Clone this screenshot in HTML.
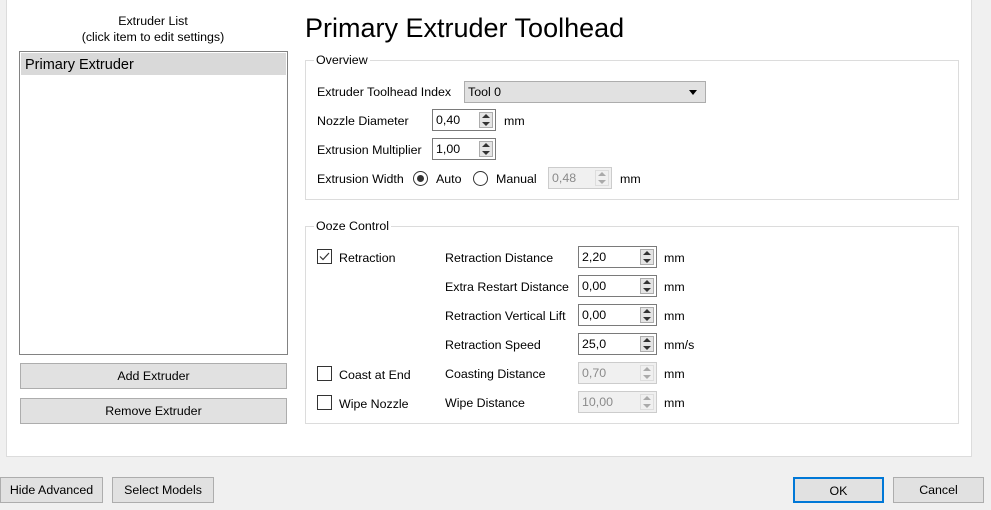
<!DOCTYPE html>
<html><head><style>
*{box-sizing:border-box;margin:0;padding:0}
body{width:991px;height:510px;background:#f0f0f0;font-family:"Liberation Sans",sans-serif;font-size:12.4px;color:#000;position:relative;overflow:hidden}
.a{position:absolute}
.panel{left:6px;top:-1px;width:966px;height:458px;background:#fff;border:1px solid #dcdcdc}
.btn{position:absolute;background:#e1e1e1;border:1px solid #adadad;text-align:center;line-height:25px}
.grp{position:absolute;border:1px solid #dcdcdc}
.grp .lb{position:absolute;left:8px;top:-8px;background:#fff;padding:0 2px;line-height:14px}
.spin{position:absolute;width:64px;height:22px;border:1px solid #7a7a7a;background:#fff;padding-left:3px;line-height:21px}
.spin.d{border-color:#ccc;background:#f0f0f0;color:#8a8a8a}
.spin .ar{position:absolute;right:2px;top:2px;width:14px;height:16px;background:#e5e5e5;border:1px solid #adadad}
.spin.d .ar{border-color:#ddd;background:#f0f0f0}
.spin .ar:before{content:"";position:absolute;left:2px;top:1px;border:4px solid transparent;border-bottom:4px solid #333;border-top:0}
.spin .ar:after{content:"";position:absolute;left:2px;bottom:1px;border:4px solid transparent;border-top:4px solid #333;border-bottom:0}
.spin.d .ar:before{border-bottom-color:#aaa}.spin.d .ar:after{border-top-color:#aaa}
.cb{position:absolute;width:15px;height:15px;border:1px solid #333;background:#fff}
.rb{position:absolute;width:15px;height:15px;border:1px solid #333;border-radius:50%;background:#fff}
.t{position:absolute;margin-top:1px}
</style></head><body>
<div class="a panel"></div>
<div class="a" style="left:19px;top:13px;width:268px;text-align:center;line-height:16px">Extruder List<br>(click item to edit settings)</div>
<div class="a" style="left:19px;top:51px;width:269px;height:304px;border:1px solid #828282;background:#fff">
 <div style="margin:1px;height:22px;background:#d9d9d9;font-size:14.5px;line-height:24px;padding-left:4px">Primary Extruder</div>
</div>
<div class="btn" style="left:20px;top:363px;width:267px;height:26px">Add Extruder</div>
<div class="btn" style="left:20px;top:398px;width:267px;height:26px">Remove Extruder</div>
<div class="a" style="left:305px;top:12px;font-size:27px;line-height:33px">Primary Extruder Toolhead</div>

<div class="grp" style="left:305px;top:60px;width:654px;height:140px"><span class="lb">Overview</span></div>
<div class="t" style="left:317px;top:84px">Extruder Toolhead Index</div>
<div class="a" style="left:464px;top:81px;width:242px;height:22px;background:#e1e1e1;border:1px solid #adadad;padding-left:3px;line-height:21px">Tool 0<span style="position:absolute;right:8px;top:8px;border:4px solid transparent;border-top:5px solid #000;border-bottom:0"></span></div>
<div class="t" style="left:317px;top:113px">Nozzle Diameter</div>
<div class="spin" style="left:432px;top:109px">0,40<div class="ar"></div></div>
<div class="t" style="left:504px;top:113px">mm</div>
<div class="t" style="left:317px;top:142px">Extrusion Multiplier</div>
<div class="spin" style="left:432px;top:138px">1,00<div class="ar"></div></div>
<div class="t" style="left:317px;top:171px">Extrusion Width</div>
<div class="rb" style="left:413px;top:171px"><div style="position:absolute;left:3px;top:3px;width:7px;height:7px;border-radius:50%;background:#333"></div></div>
<div class="t" style="left:436px;top:171px">Auto</div>
<div class="rb" style="left:473px;top:171px"></div>
<div class="t" style="left:496px;top:171px">Manual</div>
<div class="spin d" style="left:548px;top:167px">0,48<div class="ar"></div></div>
<div class="t" style="left:620px;top:171px">mm</div>

<div class="grp" style="left:305px;top:226px;width:654px;height:198px"><span class="lb">Ooze Control</span></div>
<div class="cb" style="left:317px;top:249px"><svg width="13" height="13" style="position:absolute;left:0;top:0"><path d="M2 6.5 L5 9.5 L11 3" fill="none" stroke="#333" stroke-width="1.2"/></svg></div>
<div class="t" style="left:339px;top:250px">Retraction</div>
<div class="cb" style="left:317px;top:366px"></div>
<div class="t" style="left:339px;top:367px">Coast at End</div>
<div class="cb" style="left:317px;top:395px"></div>
<div class="t" style="left:339px;top:396px">Wipe Nozzle</div>

<div class="t" style="left:445px;top:250px">Retraction Distance</div>
<div class="spin" style="left:578px;top:246px;width:79px">2,20<div class="ar"></div></div>
<div class="t" style="left:664px;top:250px">mm</div>
<div class="t" style="left:445px;top:279px">Extra Restart Distance</div>
<div class="spin" style="left:578px;top:275px;width:79px">0,00<div class="ar"></div></div>
<div class="t" style="left:664px;top:279px">mm</div>
<div class="t" style="left:445px;top:308px">Retraction Vertical Lift</div>
<div class="spin" style="left:578px;top:304px;width:79px">0,00<div class="ar"></div></div>
<div class="t" style="left:664px;top:308px">mm</div>
<div class="t" style="left:445px;top:337px">Retraction Speed</div>
<div class="spin" style="left:578px;top:333px;width:79px">25,0<div class="ar"></div></div>
<div class="t" style="left:664px;top:337px">mm/s</div>
<div class="t" style="left:445px;top:366px">Coasting Distance</div>
<div class="spin d" style="left:578px;top:362px;width:79px">0,70<div class="ar"></div></div>
<div class="t" style="left:664px;top:366px">mm</div>
<div class="t" style="left:445px;top:395px">Wipe Distance</div>
<div class="spin d" style="left:578px;top:391px;width:79px">10,00<div class="ar"></div></div>
<div class="t" style="left:664px;top:395px">mm</div>

<div class="btn" style="left:0;top:477px;width:103px;height:26px">Hide Advanced</div>
<div class="btn" style="left:112px;top:477px;width:102px;height:26px">Select Models</div>
<div class="btn" style="left:793px;top:477px;width:91px;height:26px;border:2px solid #0078d7;line-height:24px">OK</div>
<div class="btn" style="left:893px;top:477px;width:91px;height:26px">Cancel</div>
</body></html>
